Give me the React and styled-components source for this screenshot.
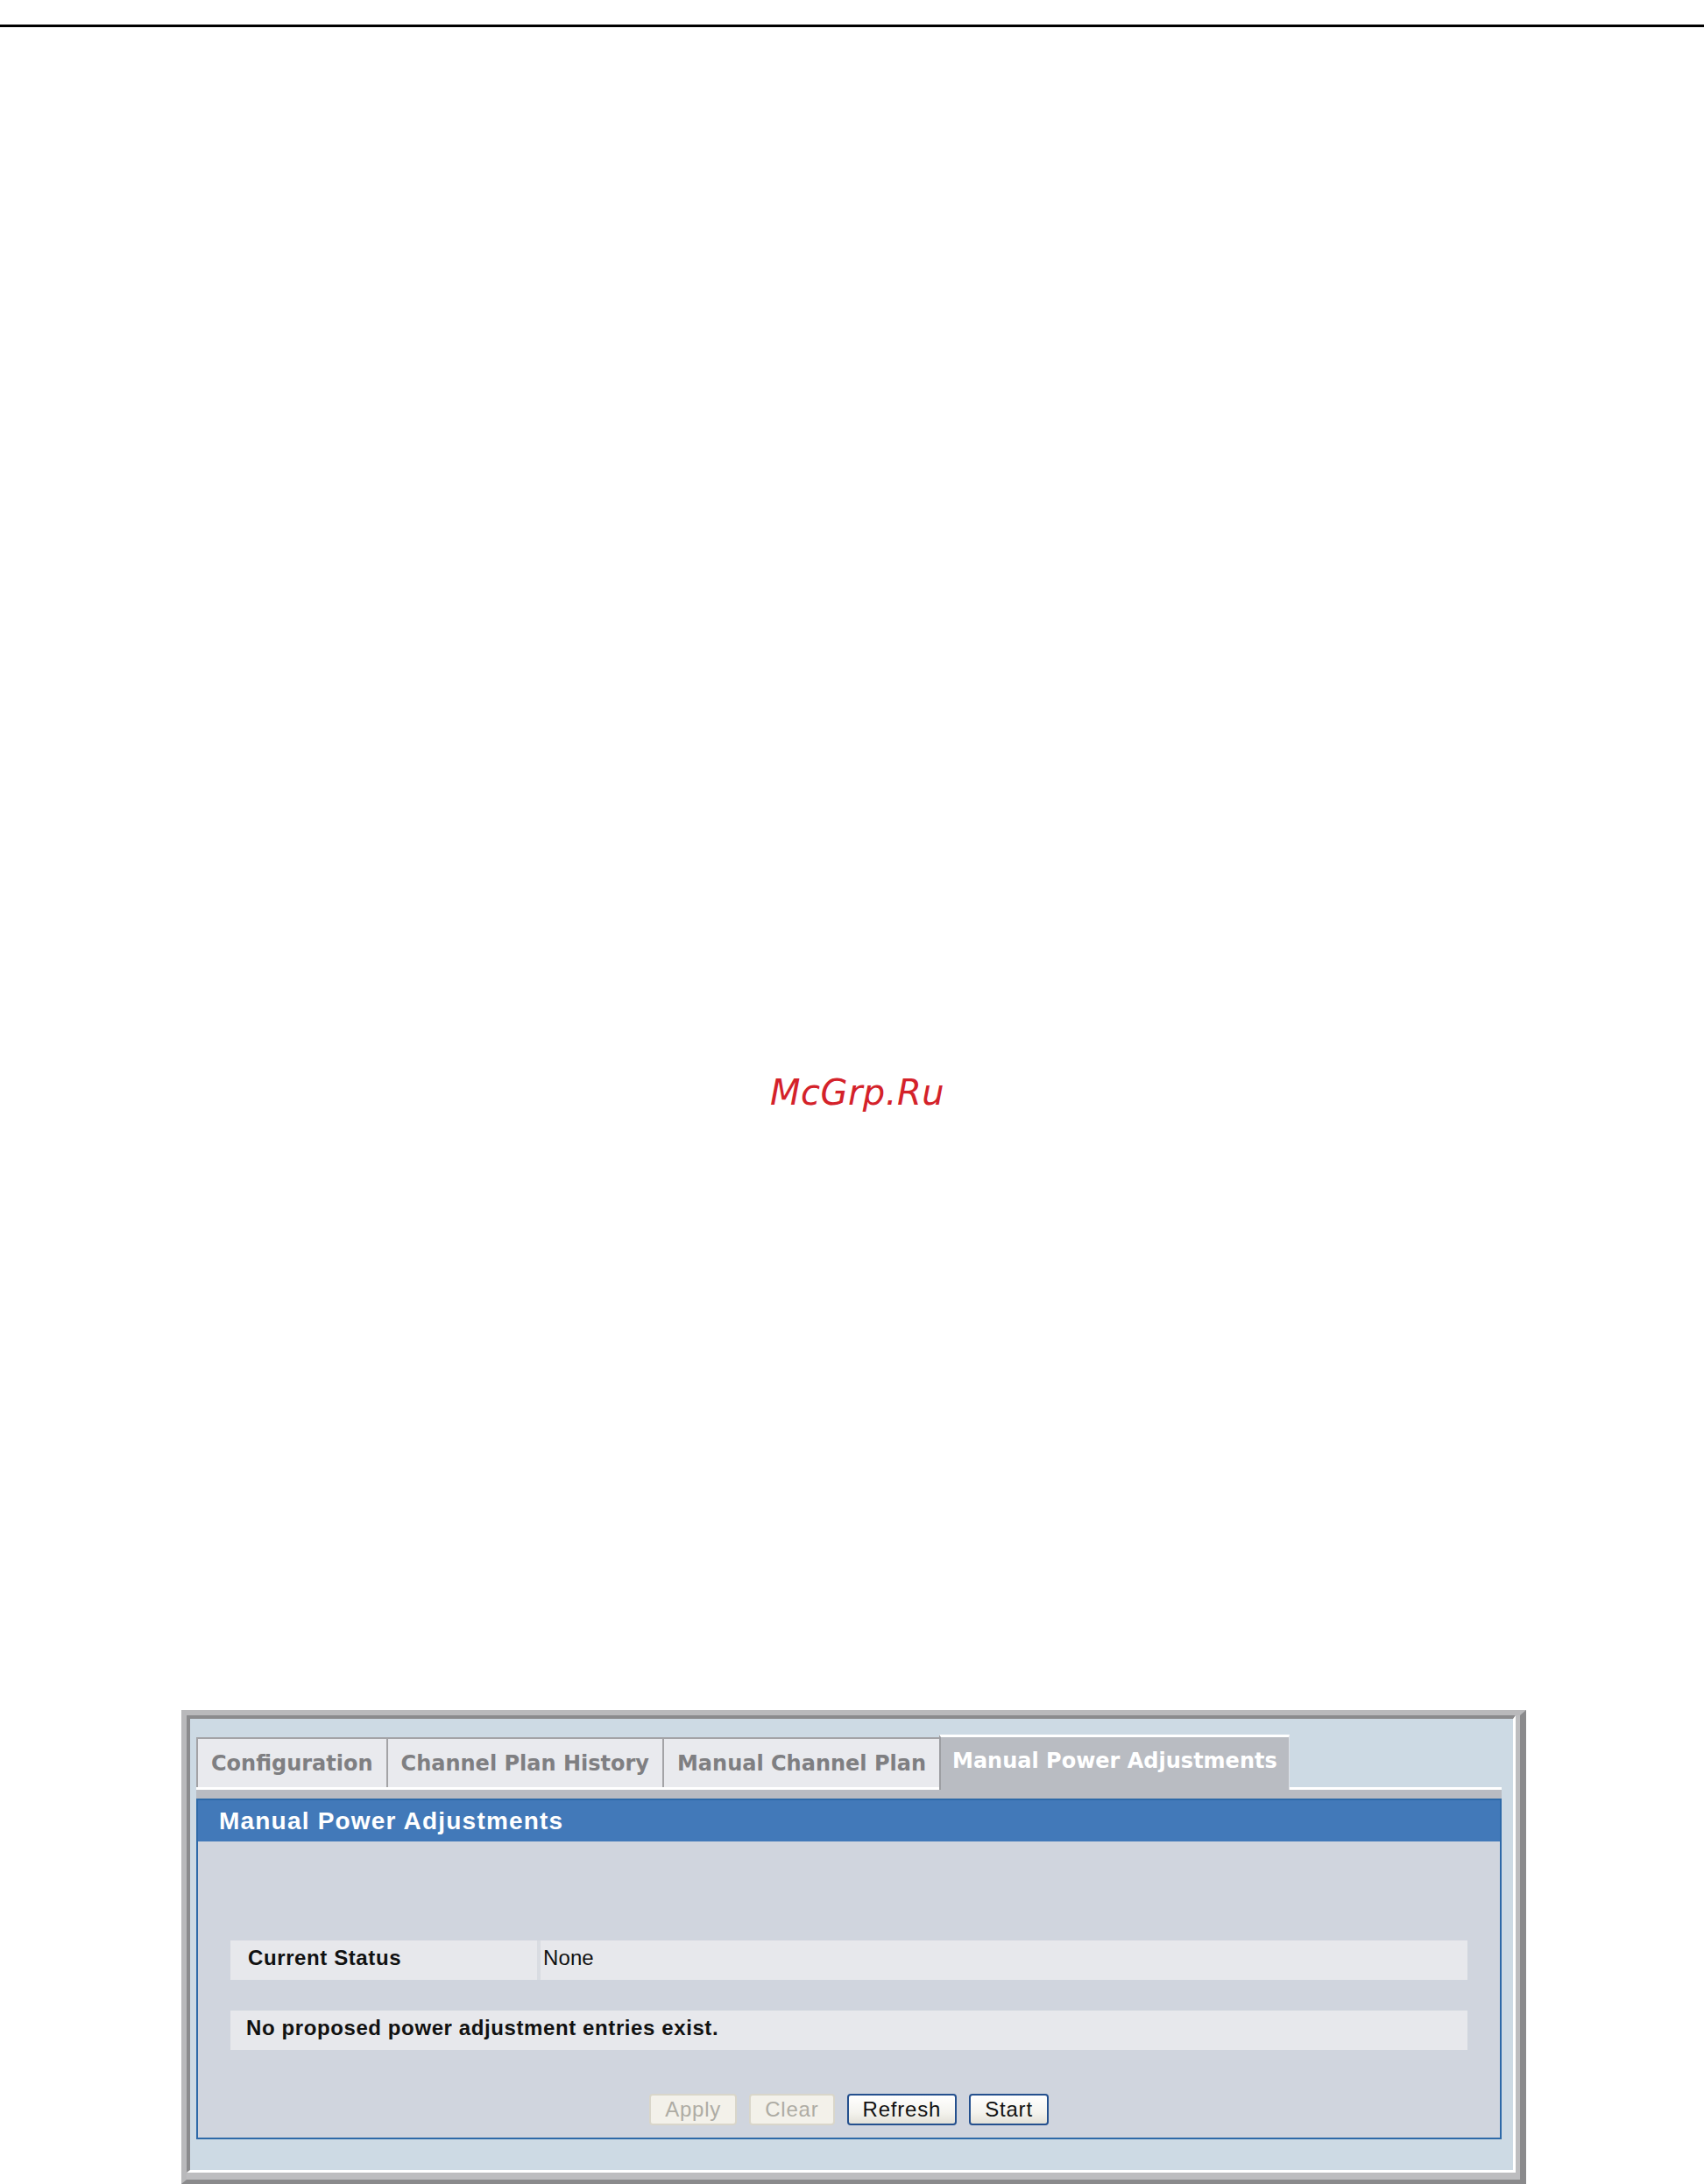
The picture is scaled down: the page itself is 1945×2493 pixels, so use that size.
import styled, { createGlobalStyle } from "styled-components";

const GlobalStyle = createGlobalStyle`
  html, body {
    margin: 0;
    padding: 0;
    background: #fff;
  }
  body {
    width: 1945px;
    height: 2493px;
    overflow: hidden;
    font-family: "Liberation Sans", Arial, sans-serif;
  }
`

const Page = styled.div`
  width: 1945px;
  padding-top: 28px;
`

const Rule = styled.div`
  height: 3px;
  background: #000;
`

const Watermark = styled.div`
  margin-top: 1192px;
  height: 48px;
  line-height: 48px;
  padding-left: 12px;
  text-align: center;
  font-family: "DejaVu Sans", sans-serif;
  font-style: oblique;
  font-size: 40px;
  letter-spacing: 0.5px;
  color: #d4222a;
`

const Frame = styled.div`
  box-sizing: border-box;
  width: 1535px;
  margin: 681px 0 0 207px;
  border-top: 6px solid #b9b9bb;
  border-left: 6px solid #b9b9bb;
  border-right: 7px solid #8a8a8c;
  border-bottom: 5px solid #8a8a8c;
  background: #bdbdbf;
  padding: 0 5px 8px 0;
`

const Well = styled.div`
  border-top: 4px solid #8b8b8d;
  border-left: 4px solid #8b8b8d;
  border-right: 3px solid #fff;
  border-bottom: 3px solid #fff;
  background: #cddae4;
  padding: 18px 13px 35px 7px;
`

const TabRow = styled.div`
  display: flex;
  align-items: flex-end;
`

const Tab = styled.div`
  box-sizing: border-box;
  display: flex;
  align-items: center;
  padding: 0 ${(p) => (p.$active ? "13px" : "15px")};
  font-family: "DejaVu Sans", Verdana, sans-serif;
  font-weight: bold;
  font-size: 24px;
  white-space: nowrap;
  height: ${(p) => (p.$active ? "63px" : "57px")};
  margin-bottom: ${(p) => (p.$active ? "-3px" : "0")};
  position: relative;
  background: ${(p) => (p.$active ? "#b9bcc2" : "#e9eaee")};
  color: ${(p) => (p.$active ? "#fff" : "#7f7f82")};
  border-top: ${(p) => (p.$active ? "3px solid #fff" : "2px solid #a3a3a6")};
  border-left: 2px solid ${(p) => (p.$active ? "#9d9ea2" : "#a3a3a6")};
  border-right: ${(p) => (p.$active ? "1px solid #dde0e5" : "none")};
  padding-bottom: ${(p) => (p.$active ? "6px" : "0")};
`

const TabBody = styled.div`
  border-top: 3px solid #fff;
  background: #b9bcc2;
  padding-top: 10px;
`

const Panel = styled.div`
  border: 2px solid #2e6aa8;
  background: #d0d5de;
`

const PanelHeader = styled.div`
  height: 47px;
  display: flex;
  align-items: center;
  padding-left: 24px;
  background: #4279b9;
  color: #fff;
  font-family: "Liberation Sans", Arial, sans-serif;
  font-weight: bold;
  font-size: 28px;
  letter-spacing: 1.2px;
`

const PanelBody = styled.div`
  padding: 113px 37px 14px;
  display: flex;
  flex-direction: column;
`

const Row = styled.div`
  display: flex;
  height: 45px;
  margin-bottom: ${(p) => p.$gap || "0"};
  background: #e7e8ec;
`

const Cell = styled.div`
  display: flex;
  align-items: center;
  padding-bottom: 5px;
  font-size: 24px;
  color: #111;
  letter-spacing: ${(p) => (p.$bold ? "0.6px" : "0.1px")};
  font-weight: ${(p) => (p.$bold ? "bold" : "normal")};
  width: ${(p) => p.$width || "auto"};
  flex: ${(p) => (p.$width ? "none" : "1")};
  padding-left: ${(p) => p.$pad || "20px"};
  border-left: ${(p) => (p.$split ? "4px solid #d9dce2" : "none")};
  box-sizing: border-box;
`

const ButtonBar = styled.div`
  display: flex;
  justify-content: center;
  gap: 14px;
  margin-top: 50px;
`

const Button = styled.button`
  height: 36px;
  padding: 0 16px;
  font-family: "Liberation Sans", Arial, sans-serif;
  font-size: 24px;
  letter-spacing: 0.8px;
  border-radius: 4px;
  border: 2px solid ${(p) => (p.disabled ? "#d9d6ca" : "#24508e")};
  color: ${(p) => (p.disabled ? "#aeaca4" : "#111")};
  background: ${(p) =>
    p.disabled ? "#f3f1ea" : "linear-gradient(#ffffff, #f4f3ee 60%, #e3e1d8)"};
  line-height: 1;
`

export default function App() {
  return (
    <Page>
      <GlobalStyle />
      <Rule />
      <Watermark>McGrp.Ru</Watermark>
      <Frame>
        <Well>
          <TabRow>
            <Tab>Configuration</Tab>
            <Tab>Channel Plan History</Tab>
            <Tab>Manual Channel Plan</Tab>
            <Tab $active>Manual Power Adjustments</Tab>
          </TabRow>
          <TabBody>
            <Panel>
              <PanelHeader>Manual Power Adjustments</PanelHeader>
              <PanelBody>
                <Row $gap="35px">
                  <Cell $bold $width="350px">Current Status</Cell>
                  <Cell $split $pad="3px">None</Cell>
                </Row>
                <Row>
                  <Cell $bold $pad="18px">No proposed power adjustment entries exist.</Cell>
                </Row>
                <ButtonBar>
                  <Button disabled>Apply</Button>
                  <Button disabled>Clear</Button>
                  <Button>Refresh</Button>
                  <Button>Start</Button>
                </ButtonBar>
              </PanelBody>
            </Panel>
          </TabBody>
        </Well>
      </Frame>
    </Page>
  )
}
